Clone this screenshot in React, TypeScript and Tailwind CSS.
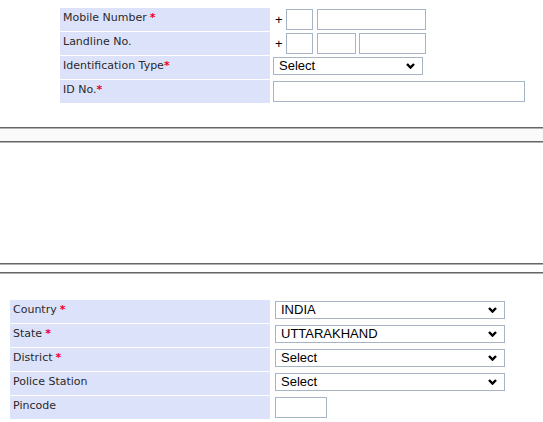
import React from 'react'

const labelFont = { fontFamily: '"DejaVu Sans", Verdana, sans-serif' }
const arial = { fontFamily: '"Liberation Sans", Arial, sans-serif' }

function Star() {
  return <span className="text-[#e8002a] font-bold ml-[3px]">*</span>
}

function Chevron() {
  return (
    <svg className="absolute right-[7px] top-1/2 -translate-y-1/2 pointer-events-none" width="9" height="6" viewBox="0 0 9 6">
      <path d="M1 1 L4.5 4.6 L8 1" fill="none" stroke="#000" strokeWidth="2.4" />
    </svg>
  )
}

function Select({ value, w }: { value: string; w: string }) {
  return (
    <div className={`relative h-[18px] ${w} border border-[#a6b4c6] bg-white`}>
      <div className="pl-[5px] text-[13px] leading-[16px] text-black" style={arial}>
        {value}
      </div>
      <Chevron />
    </div>
  )
}

function Box({ w, h = 'h-[21px]' }: { w: string; h?: string }) {
  return <div className={`${w} ${h} border border-[#a6b4c6] bg-white shrink-0`} />
}

function Row({ label, star, starTight, labelW, children }: {
  label: string
  star?: boolean
  starTight?: boolean
  labelW: string
  children: React.ReactNode
}) {
  return (
    <div className="flex h-[23px]">
      <div className={`${labelW} shrink-0 bg-[#dde2fb] pl-[3px] pt-[3px] text-[11px] leading-[14px] text-[#2a2a2a]`} style={labelFont}>
        {label}
        {star && (starTight ? <span className="text-[#e8002a] font-bold">*</span> : <Star />)}
      </div>
      <div className="flex-1 pl-[3px] flex items-start">{children}</div>
    </div>
  )
}

export default function App() {
  return (
    <div className="w-[543px] h-[422px] bg-white overflow-hidden">
      {/* Contact block */}
      <div className="pt-[8px] pl-[60px] flex flex-col gap-[1px]">
        <Row label="Mobile Number" star labelW="w-[210px]">
          <div className="flex items-center pt-[1px] pl-[2px]">
            <span className="text-[13px] text-black w-[11px]" style={arial}>+</span>
            <Box w="w-[27px]" />
            <div className="w-[4px]" />
            <Box w="w-[109px]" />
          </div>
        </Row>
        <Row label="Landline No." labelW="w-[210px]">
          <div className="flex items-center pt-[1px] pl-[2px]">
            <span className="text-[13px] text-black w-[11px]" style={arial}>+</span>
            <Box w="w-[27px]" />
            <div className="w-[4px]" />
            <Box w="w-[39px]" />
            <div className="w-[3px]" />
            <Box w="w-[67px]" />
          </div>
        </Row>
        <Row label="Identification Type" star starTight labelW="w-[210px]">
          <div className="pt-[1px]">
            <Select value="Select" w="w-[150px]" />
          </div>
        </Row>
        <Row label="ID No." star starTight labelW="w-[210px]">
          <div className="pt-[1px]">
            <Box w="w-[252px]" />
          </div>
        </Row>
      </div>

      {/* Separators */}
      <div className="mt-[24px] border-t border-t-[#666] border-b border-b-[#b0b0b0]" />
      <div className="h-[12px] bg-[#fafafa]" />
      <div className="border-t border-t-[#666] border-b border-b-[#b0b0b0]" />

      <div className="h-[120px]" />

      <div className="border-t border-t-[#666] border-b border-b-[#b0b0b0]" />
      <div className="h-[7px]" />
      <div className="border-t border-t-[#666] border-b border-b-[#b0b0b0]" />

      {/* Address block */}
      <div className="pt-[26px] pl-[10px] flex flex-col gap-[1px]">
        <Row label="Country" star labelW="w-[260px]">
          <div className="pt-[1px] pl-[2px]">
            <Select value="INDIA" w="w-[230px]" />
          </div>
        </Row>
        <Row label="State" star labelW="w-[260px]">
          <div className="pt-[1px] pl-[2px]">
            <Select value="UTTARAKHAND" w="w-[230px]" />
          </div>
        </Row>
        <Row label="District" star labelW="w-[260px]">
          <div className="pt-[1px] pl-[2px]">
            <Select value="Select" w="w-[230px]" />
          </div>
        </Row>
        <Row label="Police Station" labelW="w-[260px]">
          <div className="pt-[1px] pl-[2px]">
            <Select value="Select" w="w-[230px]" />
          </div>
        </Row>
        <Row label="Pincode" labelW="w-[260px]">
          <div className="pt-[1px] pl-[2px]">
            <Box w="w-[52px]" />
          </div>
        </Row>
      </div>
    </div>
  )
}
